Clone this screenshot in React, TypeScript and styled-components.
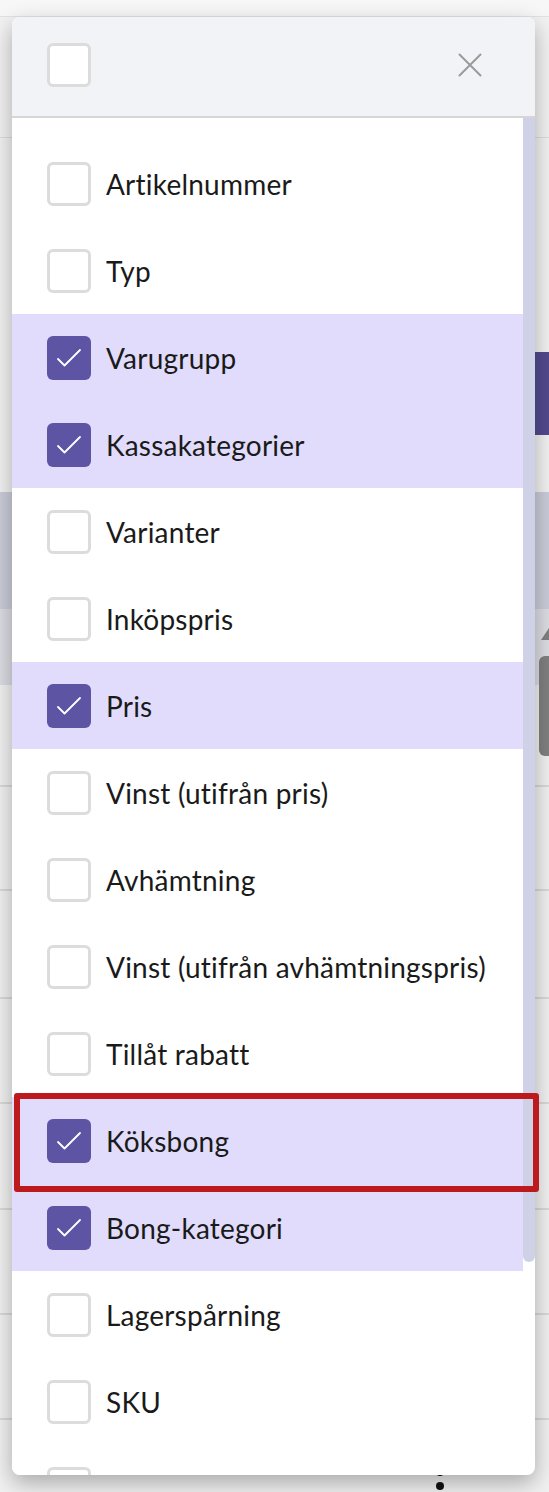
import React from 'react';
import styled, { createGlobalStyle } from 'styled-components';

const GlobalStyle = createGlobalStyle`
  html, body {
    margin: 0;
    padding: 0;
    background: #f3f3f3;
  }
  body {
    font-family: Lato, "Noto Sans", "Liberation Sans", sans-serif;
  }
`;

const colors = {
  purple: '#5e54a4',
  purpleDark: '#534a8e',
  lavender: '#e1dcfc',
  text: '#1a1a1a',
  boxBorder: '#dcdcdc',
  header: '#f2f3f7',
  thumb: '#cfd2e6',
  red: '#bd1a1e',
};

const Page = styled.div`
  position: relative;
  width: 549px;
  height: 1492px;
  overflow: hidden;
  background: #f2f2f2;
`;

/* ---------- background page (mostly covered) ---------- */

const TopBar = styled.div`
  height: 16px;
  background: #f7f7f7;
  border-bottom: 1px solid #e2e2e2;
`;

const Toolbar = styled.div`
  height: 120px;
  border-bottom: 1px solid #dedede;
`;

const ActionRow = styled.div`
  display: flex;
  justify-content: flex-end;
  padding-top: 214px;
`;

const ActionButton = styled.div`
  width: 180px;
  height: 83px;
  background: ${colors.purpleDark};
  border-radius: 6px 0 0 6px;
`;

const TableHead = styled.div`
  margin-top: 57px;
  height: 117px;
  background: #cacdd9;
`;

const TableSub = styled.div`
  height: 76px;
  background: #dcdde3;
`;

const TableRow = styled.div<{ $h: number }>`
  height: ${(p) => p.$h}px;
  box-sizing: border-box;
  border-bottom: 2px solid #d9d9d9;
  background: #f1f1f1;
`;

const SideHandle = styled.div`
  position: absolute;
  right: -6px;
  top: 656px;
  width: 16px;
  height: 100px;
  border-radius: 6px;
  background: #808080;
  &:before {
    content: '';
    position: absolute;
    top: -28px;
    left: 2px;
    border-left: 8px solid transparent;
    border-right: 8px solid transparent;
    border-bottom: 12px solid #808080;
  }
`;

const Kebab = styled.div`
  position: absolute;
  left: 436px;
  top: 1454px;
  display: flex;
  flex-direction: column;
  gap: 6px;
`;

const Dot = styled.span`
  width: 8px;
  height: 8px;
  border-radius: 50%;
  background: #111;
`;

/* ---------- dropdown panel ---------- */

const Panel = styled.div`
  position: absolute;
  left: 12px;
  top: 17px;
  width: 523px;
  height: 1458px;
  background: #fff;
  border-radius: 8px;
  box-shadow: 0 8px 22px rgba(0, 0, 0, 0.3);
  overflow: hidden;
  display: flex;
  flex-direction: column;
`;

const Header = styled.div`
  flex: 0 0 auto;
  height: 101px;
  box-sizing: border-box;
  background: ${colors.header};
  border-bottom: 2px solid #d6d6d6;
  display: flex;
  align-items: center;
  justify-content: space-between;
  padding: 0 53px 4px 35px;
`;

const CloseButton = styled.button`
  width: 24px;
  height: 24px;
  padding: 0;
  border: none;
  background: none;
  cursor: pointer;
  display: flex;
  align-items: center;
  justify-content: center;
`;

const Body = styled.div`
  flex: 1 1 auto;
  min-height: 0;
  display: flex;
`;

const List = styled.div`
  flex: 1 1 auto;
  overflow: hidden;
  padding: 22px 0;
`;

const ScrollTrack = styled.div`
  flex: 0 0 12px;
`;

const ScrollThumb = styled.div`
  height: 1144px;
  border-radius: 0 0 6px 6px;
  background: ${colors.thumb};
`;

const Row = styled.label<{ $checked: boolean }>`
  display: flex;
  align-items: center;
  gap: 15px;
  height: 87px;
  padding-left: 35px;
  background: ${(p) => (p.$checked ? colors.lavender : '#fff')};
  cursor: pointer;
`;

const Box = styled.span<{ $checked: boolean }>`
  flex: 0 0 auto;
  width: 44px;
  height: 44px;
  box-sizing: border-box;
  border-radius: 6px;
  border: ${(p) => (p.$checked ? 'none' : `3px solid ${colors.boxBorder}`)};
  background: ${(p) => (p.$checked ? colors.purple : '#fff')};
  display: flex;
  align-items: center;
  justify-content: center;
`;

const Label = styled.span`
  font-size: 28px;
  letter-spacing: 0.22px;
  color: ${colors.text};
  white-space: nowrap;
`;

const Highlight = styled.div`
  position: absolute;
  left: 14px;
  top: 1093px;
  width: 525px;
  height: 99px;
  box-sizing: border-box;
  border: 6px solid ${colors.red};
  border-radius: 3px;
  pointer-events: none;
`;

const columns: { name: string; checked: boolean }[] = [
  { name: 'Artikelnummer', checked: false },
  { name: 'Typ', checked: false },
  { name: 'Varugrupp', checked: true },
  { name: 'Kassakategorier', checked: true },
  { name: 'Varianter', checked: false },
  { name: 'Inköpspris', checked: false },
  { name: 'Pris', checked: true },
  { name: 'Vinst (utifrån pris)', checked: false },
  { name: 'Avhämtning', checked: false },
  { name: 'Vinst (utifrån avhämtningspris)', checked: false },
  { name: 'Tillåt rabatt', checked: false },
  { name: 'Köksbong', checked: true },
  { name: 'Bong-kategori', checked: true },
  { name: 'Lagerspårning', checked: false },
  { name: 'SKU', checked: false },
  { name: '', checked: false },
];

const Check = () => (
  <svg width="44" height="44" viewBox="0 0 44 44" fill="none">
    <path d="M11 23 L17.5 29.5 L33 14" stroke="#fff" strokeWidth="1.8" strokeLinecap="round" strokeLinejoin="round" />
  </svg>
);

const CloseIcon = () => (
  <svg width="24" height="24" viewBox="0 0 24 24" fill="none">
    <path d="M1.5 1.5 L22.5 22.5 M22.5 1.5 L1.5 22.5" stroke="#9a9a9a" strokeWidth="2" strokeLinecap="round" />
  </svg>
);

export default function App() {
  const rowHeights = [102, 104, 108, 105, 106, 105, 105, 105];
  return (
    <Page>
      <GlobalStyle />
      <TopBar />
      <Toolbar />
      <ActionRow>
        <ActionButton />
      </ActionRow>
      <TableHead />
      <TableSub />
      {rowHeights.map((h, i) => (
        <TableRow key={i} $h={h} />
      ))}
      <SideHandle />
      <Kebab>
        <Dot />
        <Dot />
        <Dot />
      </Kebab>

      <Panel>
        <Header>
          <Box $checked={false} />
          <CloseButton aria-label="Stäng">
            <CloseIcon />
          </CloseButton>
        </Header>
        <Body>
          <List>
            {columns.map((c, i) => (
              <Row key={i} $checked={c.checked}>
                <Box $checked={c.checked}>{c.checked && <Check />}</Box>
                {c.name && <Label>{c.name}</Label>}
              </Row>
            ))}
          </List>
          <ScrollTrack>
            <ScrollThumb />
          </ScrollTrack>
        </Body>
      </Panel>
      <Highlight />
    </Page>
  );
}
